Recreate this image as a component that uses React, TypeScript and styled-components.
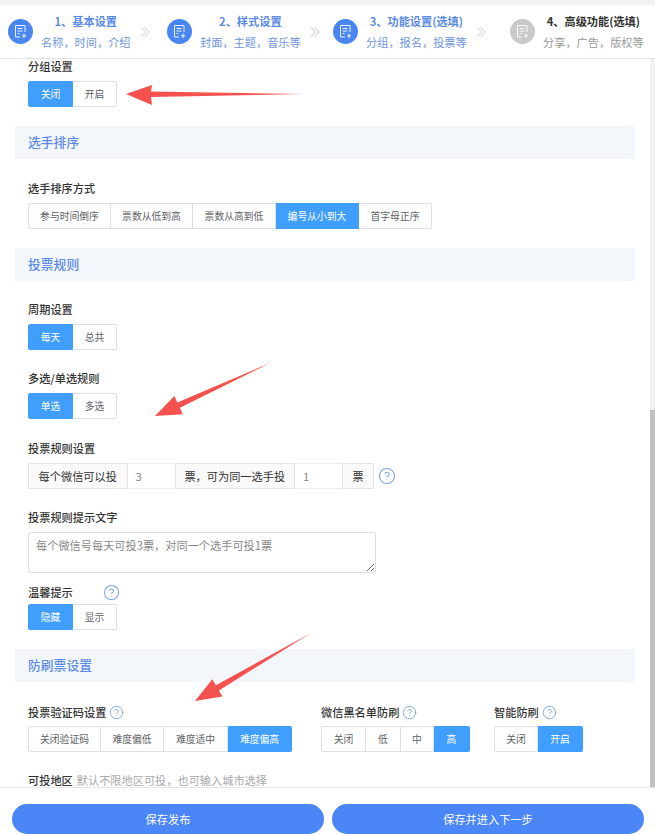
import React from "react";
import styled, { createGlobalStyle } from "styled-components";
import { CircleHelp } from "lucide-react";

const Global = createGlobalStyle`
  html, body { margin: 0; padding: 0; background: #fff; overflow: hidden; }
  * { box-sizing: border-box; }
  body { font-family: "Noto Sans CJK SC", "Noto Sans", sans-serif; }
`;

const Page = styled.div`
  position: relative;
  width: 655px;
  height: 834px;
  display: flex;
  flex-direction: column;
  overflow: hidden;
`;
const TopStrip = styled.div`
  height: 5px;
  flex: none;
  background: #f1f1f1;
`;
const Header = styled.header`
  flex: none;
  height: 54px;
  padding-left: 8px;
  display: flex;
  align-items: center;
  border-bottom: 1px solid #e3e3e3;
  background: #fff;
`;
const Step = styled.div<{ $width: number }>`
  flex: none;
  width: ${(p) => p.$width}px;
  display: flex;
  align-items: center;
`;
const Circle = styled.div<{ $on: boolean }>`
  flex: none;
  width: 25px;
  height: 25px;
  border-radius: 50%;
  display: flex;
  align-items: center;
  justify-content: center;
  background: ${(p) => (p.$on ? "#4a86f2" : "#c9c9c9")};
`;
const StepText = styled.div`
  margin-left: 8px;
  display: flex;
  flex-direction: column;
  gap: 5px;
  align-items: center;
  white-space: nowrap;
`;
const StepTitle = styled.div<{ $on: boolean }>`
  font-size: 11.2px;
  line-height: 16px;
  font-weight: 700;
  color: ${(p) => (p.$on ? "#5b8ae6" : "#333")};
`;
const StepSub = styled.div<{ $on: boolean }>`
  font-size: 11.2px;
  line-height: 16px;
  color: ${(p) => (p.$on ? "#6f95dd" : "#999")};
`;
const Chevrons = styled.svg`
  flex: none;
  width: 10px;
  height: 12px;
  margin-left: 9px;
`;

const Middle = styled.div`
  flex: 1;
  min-height: 0;
  display: flex;
`;
const Main = styled.main`
  flex: 1;
  min-width: 0;
  overflow: hidden;
  padding: 0 15px;
`;
const Track = styled.div`
  flex: none;
  width: 5px;
  background: #f1f1f1;
  padding-top: 351px;
`;
const Thumb = styled.div`
  height: 100%;
  background: #c1c1c1;
`;

const Section = styled.h2<{ $top: number }>`
  margin: ${(p) => p.$top}px 0 0;
  width: 620px;
  height: 33px;
  padding: 0 0 2px 13px;
  display: flex;
  align-items: center;
  font-size: 12.8px;
  font-weight: 500;
  color: #5b8ae6;
  background: #f3f7fc;
`;
const Field = styled.div<{ $top: number }>`
  margin-top: ${(p) => p.$top}px;
  padding-left: 13px;
`;
const Label = styled.div<{ $gap?: number }>`
  height: 14px;
  margin-bottom: ${(p) => p.$gap ?? 8}px;
  display: flex;
  align-items: center;
  font-size: 11.2px;
  line-height: 14px;
  font-weight: 500;
  color: #333;
  white-space: nowrap;
`;
const Hint = styled.span`
  margin-left: 4px;
  font-weight: 400;
  color: #aaa;
`;
const Help = styled(CircleHelp)<{ $left: number }>`
  flex: none;
  margin-left: ${(p) => p.$left}px;
  color: #7fa6e8;
`;
const Group = styled.div`
  display: flex;
  height: 26px;
`;
const Option = styled.div<{ $width: number; $on?: boolean }>`
  flex: none;
  width: ${(p) => p.$width}px;
  padding-bottom: 1px;
  display: flex;
  align-items: center;
  justify-content: center;
  font-size: 9.8px;
  color: ${(p) => (p.$on ? "#fff" : "#606266")};
  background: ${(p) => (p.$on ? "#409eff" : "#fff")};
  border: 1px solid ${(p) => (p.$on ? "#409eff" : "#dcdfe6")};
  border-left-width: 0;
  &:first-child {
    border-left-width: 1px;
    border-radius: 2px 0 0 2px;
  }
  &:last-child {
    border-radius: 0 2px 2px 0;
  }
`;
const Columns = styled.div`
  display: grid;
  grid-template-columns: 293px 173px auto;
`;
const RuleRow = styled.div`
  display: flex;
  align-items: center;
  height: 26px;
`;
const Addon = styled.div<{ $width: number }>`
  flex: none;
  width: ${(p) => p.$width}px;
  height: 26px;
  padding-bottom: 1px;
  display: flex;
  align-items: center;
  justify-content: center;
  font-size: 11.2px;
  color: #333;
  background: #fafafa;
  border: 1px solid #e2e4ea;
  border-radius: 1px;
  white-space: nowrap;
`;
const NumberInput = styled.input`
  flex: none;
  width: 47px;
  height: 26px;
  padding: 0 8px;
  border: 1px solid #eceef2;
  border-width: 1px 0;
  outline: none;
  font: inherit;
  font-size: 11.2px;
  color: #888;
  background: #fff;
`;
const Textarea = styled.textarea`
  display: block;
  width: 348px;
  height: 41px;
  padding: 4px 7px;
  border: 1px solid #dcdfe6;
  border-radius: 2px;
  outline: none;
  resize: vertical;
  font: inherit;
  font-size: 11.2px;
  line-height: 16px;
  color: #888;
`;
const Footer = styled.footer`
  flex: none;
  height: 47px;
  border-top: 1px solid #e6e6e6;
  padding: 16px 11px 0 12px;
  display: flex;
  gap: 8px;
  background: #fff;
`;
const SaveButton = styled.button`
  flex: 1;
  height: 30px;
  padding: 0 0 1px;
  border: 0;
  border-radius: 15px;
  background: #4a86f7;
  color: #fff;
  font: inherit;
  font-size: 11.2px;
`;
const ArrowLayer = styled.svg`
  position: absolute;
  left: 0;
  top: 0;
  width: 655px;
  height: 834px;
  pointer-events: none;
`;

const DocIcon = () => (
  <svg width="15" height="15" viewBox="0 0 15 15" fill="none" stroke="#fff" strokeWidth="1" opacity="0.9">
    <path d="M7 13H2.5V1.5h9.5V8" />
    <path d="M4.5 4.5h5M4.5 7h5M4.5 9.5h2" />
    <path d="M11 9.5v4.5M9 11.8h4.2" />
  </svg>
);

const steps = [
  { w: 159, t: "1、基本设置", s: "名称，时间，介绍", on: true },
  { w: 166, t: "2、样式设置", s: "封面，主题，音乐等", on: true },
  { w: 177, t: "3、功能设置(选填)", s: "分组，报名，投票等", on: true },
  { w: 145, t: "4、高级功能(选填)", s: "分享，广告，版权等", on: false },
];

type Opt = [string, number, boolean?];
const Options = ({ items }: { items: Opt[] }) => (
  <Group>
    {items.map(([text, width, on]) => (
      <Option key={text} $width={width} $on={on}>
        {text}
      </Option>
    ))}
  </Group>
);

export default function App() {
  return (
    <Page>
      <Global />
      <TopStrip />
      <Header>
        {steps.map((st, i) => (
          <Step key={st.t} $width={st.w}>
            <Circle $on={st.on}>
              <DocIcon />
            </Circle>
            <StepText>
              <StepTitle $on={st.on}>{st.t}</StepTitle>
              <StepSub $on={st.on}>{st.s}</StepSub>
            </StepText>
            {i < 3 && (
              <Chevrons viewBox="0 0 10 12" fill="none" stroke="#d6d6d6" strokeWidth="1.1">
                <path d="M1 1l4.5 5L1 11M4.5 1L9 6l-4.5 5" />
              </Chevrons>
            )}
          </Step>
        ))}
      </Header>
      <Middle>
        <Main>
          <Field $top={0}>
            <Label>分组设置</Label>
            <Options items={[["关闭", 45, true], ["开启", 44]]} />
          </Field>
          <Section $top={19}>选手排序</Section>
          <Field $top={22}>
            <Label>选手排序方式</Label>
            <Options
              items={[
                ["参与时间倒序", 83],
                ["票数从低到高", 82],
                ["票数从高到低", 83],
                ["编号从小到大", 83, true],
                ["首字母正序", 73],
              ]}
            />
          </Field>
          <Section $top={19}>投票规则</Section>
          <Field $top={21}>
            <Label>周期设置</Label>
            <Options items={[["每天", 45, true], ["总共", 44]]} />
          </Field>
          <Field $top={21}>
            <Label>多选/单选规则</Label>
            <Options items={[["单选", 45, true], ["多选", 44]]} />
          </Field>
          <Field $top={22}>
            <Label>投票规则设置</Label>
            <RuleRow>
              <Addon $width={99.5}>每个微信可以投</Addon>
              <NumberInput defaultValue="3" />
              <Addon $width={120.5}>票，可为同一选手投</Addon>
              <NumberInput defaultValue="1" />
              <Addon $width={32}>票</Addon>
              <Help $left={4} size={18} strokeWidth={1.5} />
            </RuleRow>
          </Field>
          <Field $top={21}>
            <Label>投票规则提示文字</Label>
            <Textarea defaultValue="每个微信号每天可投3票，对同一个选手可投1票" />
          </Field>
          <Field $top={12}>
            <Label $gap={5}>
              温馨提示
              <Help $left={30} size={17} strokeWidth={1.5} />
            </Label>
            <Options items={[["隐藏", 45, true], ["显示", 44]]} />
          </Field>
          <Section $top={19}>防刷票设置</Section>
          <Field $top={23}>
            <Columns>
              <div>
                <Label $gap={7}>
                  投票验证码设置
                  <Help $left={3} size={15} strokeWidth={1.5} />
                </Label>
                <Options
                  items={[
                    ["关闭验证码", 73],
                    ["难度偏低", 63],
                    ["难度适中", 64],
                    ["难度偏高", 64, true],
                  ]}
                />
              </div>
              <div>
                <Label $gap={7}>
                  微信黑名单防刷
                  <Help $left={3} size={15} strokeWidth={1.5} />
                </Label>
                <Options items={[["关闭", 45], ["低", 35], ["中", 33], ["高", 36, true]]} />
              </div>
              <div>
                <Label $gap={7}>
                  智能防刷
                  <Help $left={3} size={15} strokeWidth={1.5} />
                </Label>
                <Options items={[["关闭", 44], ["开启", 45, true]]} />
              </div>
            </Columns>
          </Field>
          <Field $top={21}>
            <Label>
              可投地区<Hint>默认不限地区可投，也可输入城市选择</Hint>
            </Label>
          </Field>
        </Main>
        <Track>
          <Thumb />
        </Track>
      </Middle>
      <Footer>
        <SaveButton>保存发布</SaveButton>
        <SaveButton>保存并进入下一步</SaveButton>
      </Footer>
      <ArrowLayer viewBox="0 0 655 834">
        <g fill="#f4514f">
          <polygon points="126,94 152,85 151,91.5 303,94 151,97 152,105" />
          <polygon points="155,416 174.4,396 177.3,402.4 270,363 179.9,407.8 182.8,414.2" />
          <polygon points="195,701 212.3,679.3 215.9,685.3 311,633 218.9,690.5 222.5,696.5" />
        </g>
      </ArrowLayer>
    </Page>
  );
}
